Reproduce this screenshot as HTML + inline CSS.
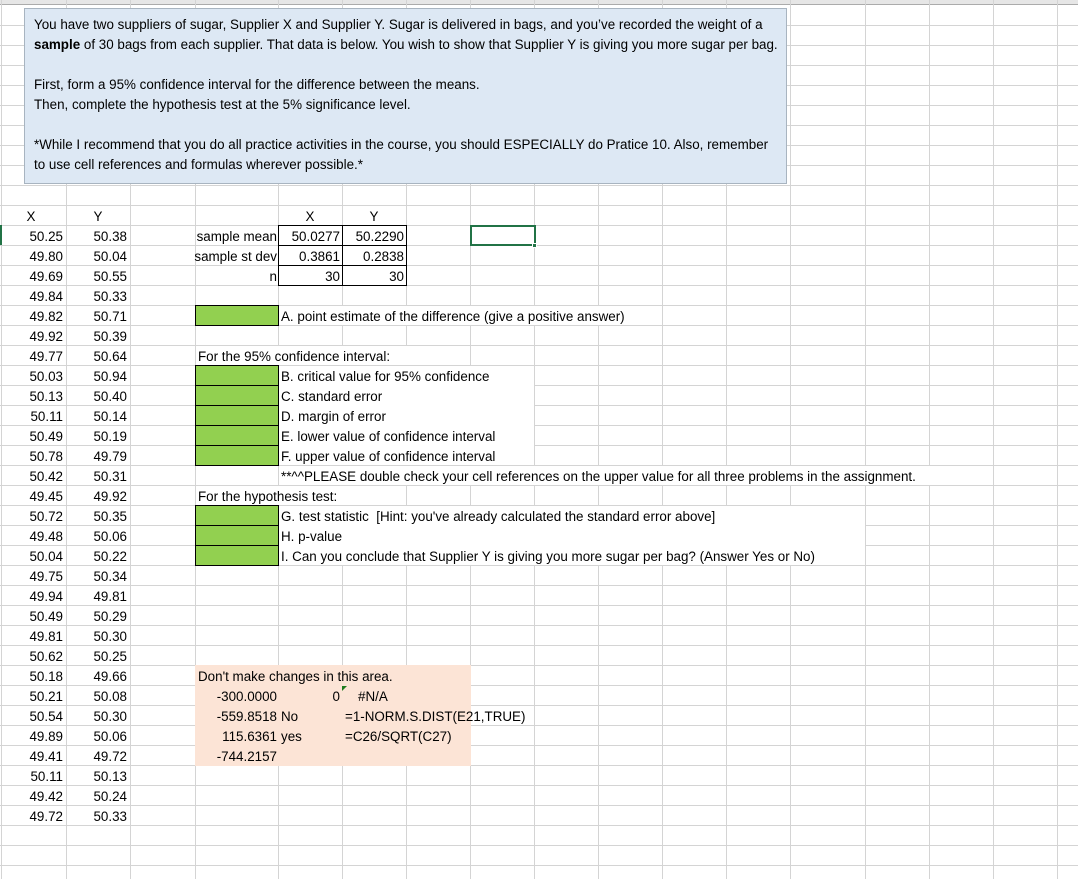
<!DOCTYPE html>
<html><head><meta charset="utf-8"><style>
*{margin:0;padding:0;box-sizing:border-box}
body{width:1078px;height:879px;position:relative;overflow:hidden;background:#fff;font-family:"Liberation Sans",Arial,sans-serif;font-size:13.4px;color:#000}
.h{position:absolute;left:0;width:1078px;height:1px;background:#d4d4d4}
.v{position:absolute;top:0;height:879px;width:1px;background:#d4d4d4}
.t{position:absolute;height:20px;line-height:24px;white-space:nowrap}
.r{text-align:right}
.c{text-align:center}
.g{position:absolute;background:#92d050;border:1px solid #000}
.bx{position:absolute;border:1px solid #000}
.wb{position:absolute;height:19px;background:#fff}
</style></head><body>
<div style="position:absolute;left:0;top:0;width:1078px;height:5px;background:#e6e6e6;border-bottom:1px solid #ababab"></div>
<div id="grid"></div>
<script>
var g=document.getElementById('grid'),s='';
for(var y=25;y<879;y+=20)s+='<div class="h" style="top:'+y+'px"></div>';
[1,66,130,195,278,342,406,470,534,598,662,726,790,865,929,993,1057].forEach(function(x){s+='<div class="v" style="left:'+x+'px"></div>';});
g.innerHTML=s;
</script>
<div style="position:absolute;left:0;top:225px;width:2px;height:20px;background:#217346"></div>

<div style="position:absolute;left:24px;top:8px;width:763px;height:176px;background:#dde8f4;border:1px solid #a8b4c0;padding:6px 9px;line-height:20px;font-size:13.4px;white-space:nowrap">
You have two suppliers of sugar, Supplier X and Supplier Y. Sugar is delivered in bags, and you’ve recorded the weight of a<br><b>sample</b> of 30 bags from each supplier. That data is below. You wish to show that Supplier Y is giving you more sugar per bag.<br><br>First, form a 95% confidence interval for the difference between the means.<br>Then, complete the hypothesis test at the 5% significance level.<br><br>*While I recommend that you do all practice activities in the course, you should ESPECIALLY do Pratice 10. Also, remember<br>to use cell references and formulas wherever possible.*
</div>

<div class="t c" style="left:2px;top:205px;width:64px;padding-right:6px">X</div>
<div class="t c" style="left:66px;top:205px;width:64px">Y</div>
<div id="data"></div>
<script>
var X="50.25 49.80 49.69 49.84 49.82 49.92 49.77 50.03 50.13 50.11 50.49 50.78 50.42 49.45 50.72 49.48 50.04 49.75 49.94 50.49 49.81 50.62 50.18 50.21 50.54 49.89 49.41 50.11 49.42 49.72".split(' ');
var Y="50.38 50.04 50.55 50.33 50.71 50.39 50.64 50.94 50.40 50.14 50.19 49.79 50.31 49.92 50.35 50.06 50.22 50.34 49.81 50.29 50.30 50.25 49.66 50.08 50.30 50.06 49.72 50.13 50.24 50.33".split(' ');
var d='';
for(var i=0;i<30;i++){var t=225+20*i;
d+='<div class="t r" style="left:2px;top:'+t+'px;width:61px">'+X[i]+'</div>';
d+='<div class="t r" style="left:66px;top:'+t+'px;width:61px">'+Y[i]+'</div>';}
document.getElementById('data').innerHTML=d;
</script>

<div class="t c" style="left:278px;top:205px;width:64px">X</div>
<div class="t c" style="left:342px;top:205px;width:64px">Y</div>
<div class="t r" style="left:140px;top:225px;width:137px">sample mean</div>
<div class="t r" style="left:140px;top:245px;width:137px">sample st dev</div>
<div class="t r" style="left:140px;top:265px;width:137px">n</div>
<div class="bx" style="left:278px;top:225px;width:65px;height:61px"></div>
<div class="bx" style="left:342px;top:225px;width:65px;height:61px"></div>
<div class="bx" style="left:278px;top:245px;width:129px;height:21px"></div>
<div class="t r" style="left:278px;top:225px;width:62px">50.0277</div>
<div class="t r" style="left:342px;top:225px;width:62px">50.2290</div>
<div class="t r" style="left:278px;top:245px;width:62px">0.3861</div>
<div class="t r" style="left:342px;top:245px;width:62px">0.2838</div>
<div class="t r" style="left:278px;top:265px;width:62px">30</div>
<div class="t r" style="left:342px;top:265px;width:62px">30</div>

<div style="position:absolute;left:470px;top:225px;width:66px;height:21px;border:2px solid #217346"></div>
<div style="position:absolute;left:532px;top:243px;width:5px;height:5px;background:#217346;border:1px solid #fff"></div>

<div class="wb" style="left:279px;top:306px;width:383px"></div>
<div class="wb" style="left:196px;top:346px;width:274px"></div>
<div class="wb" style="left:279px;top:366px;width:255px;height:99px"></div>
<div class="wb" style="left:279px;top:466px;width:714px"></div>
<div class="wb" style="left:196px;top:486px;width:210px"></div>
<div class="wb" style="left:279px;top:506px;width:586px;height:59px"></div>

<div class="g" style="left:195px;top:305px;width:84px;height:21px"></div>
<div class="g" style="left:195px;top:365px;width:84px;height:21px"></div>
<div class="g" style="left:195px;top:385px;width:84px;height:21px"></div>
<div class="g" style="left:195px;top:405px;width:84px;height:21px"></div>
<div class="g" style="left:195px;top:425px;width:84px;height:21px"></div>
<div class="g" style="left:195px;top:445px;width:84px;height:21px"></div>
<div class="g" style="left:195px;top:505px;width:84px;height:21px"></div>
<div class="g" style="left:195px;top:525px;width:84px;height:21px"></div>
<div class="g" style="left:195px;top:545px;width:84px;height:21px"></div>

<div class="t" style="left:281px;top:305px">A. point estimate of the difference (give a positive answer)</div>
<div class="t" style="left:198px;top:345px">For the 95% confidence interval:</div>
<div class="t" style="left:281px;top:365px">B. critical value for 95% confidence</div>
<div class="t" style="left:281px;top:385px">C. standard error</div>
<div class="t" style="left:281px;top:405px">D. margin of error</div>
<div class="t" style="left:281px;top:425px">E. lower value of confidence interval</div>
<div class="t" style="left:281px;top:445px">F. upper value of confidence interval</div>
<div class="t" style="left:281px;top:465px">**^^PLEASE double check your cell references on the upper value for all three problems in the assignment.</div>
<div class="t" style="left:198px;top:485px">For the hypothesis test:</div>
<div class="t" style="left:281px;top:505px">G. test statistic&nbsp; [Hint: you've already calculated the standard error above]</div>
<div class="t" style="left:281px;top:525px">H. p-value</div>
<div class="t" style="left:281px;top:545px">I. Can you conclude that Supplier Y is giving you more sugar per bag? (Answer Yes or No)</div>

<div style="position:absolute;left:195px;top:665px;width:276px;height:101px;background:#fce4d6"></div>
<div class="t" style="left:198px;top:665px">Don't make changes in this area.</div>
<div class="t r" style="left:195px;top:685px;width:82px">-300.0000</div>
<div class="t r" style="left:195px;top:705px;width:82px">-559.8518</div>
<div class="t r" style="left:195px;top:725px;width:82px">115.6361</div>
<div class="t r" style="left:195px;top:745px;width:82px">-744.2157</div>
<div class="t" style="left:281px;top:705px">No</div>
<div class="t" style="left:281px;top:725px">yes</div>
<div class="t r" style="left:278px;top:685px;width:62px">0</div>
<div style="position:absolute;left:342px;top:686px;width:0;height:0;border-top:5px solid #1e7b1e;border-right:5px solid transparent"></div>
<div class="t" style="left:358px;top:685px">#N/A</div>
<div class="t" style="left:345px;top:705px">=1-NORM.S.DIST(E21,TRUE)</div>
<div class="t" style="left:345px;top:725px">=C26/SQRT(C27)</div>
</body></html>
